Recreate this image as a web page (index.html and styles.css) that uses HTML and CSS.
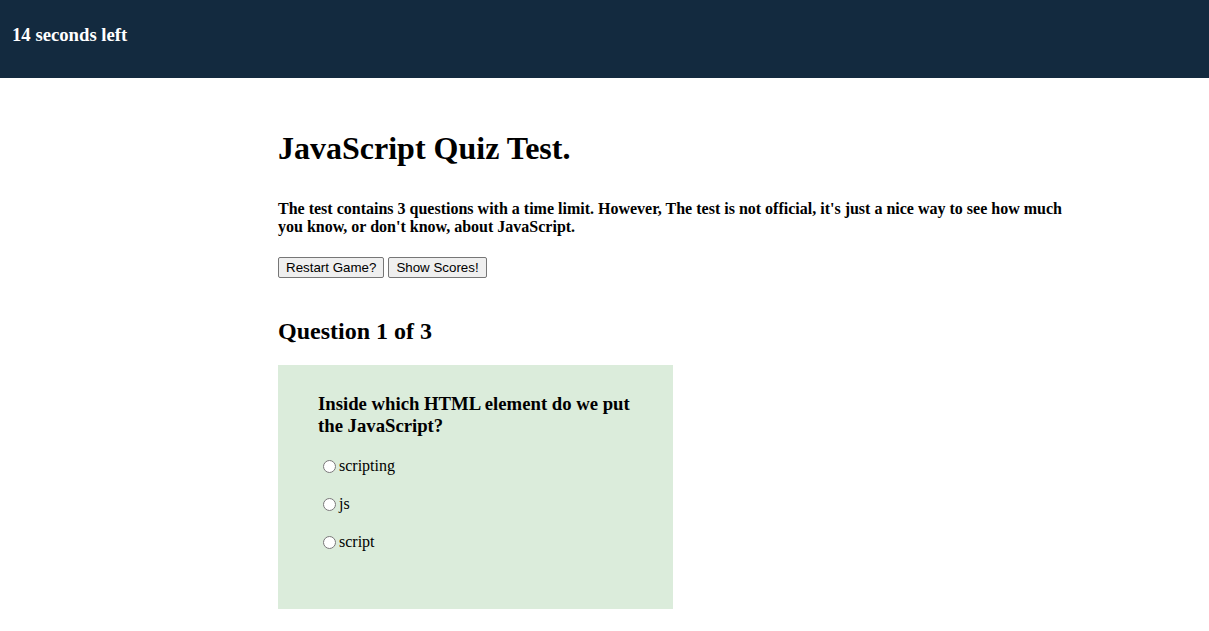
FILE: index.html
```html
<!DOCTYPE html>
<html>
  <head>
    <title>JavaScript Quiz</title>
    <link rel="stylesheet" href="styles.css">
  </head>
  <body>
    <header class="timer-bar">
      <h3 class="timer-bar__text"><span id="seconds">14</span> seconds left</h3>
    </header>

    <main class="quiz">
      <h1 class="quiz__title">JavaScript Quiz Test.</h1>
      <p class="quiz__intro">The test contains 3 questions with a time limit. However, The test is not official, it's just a nice way to see how much you know, or don't know, about JavaScript.</p>

      <div class="quiz__actions">
        <button type="button" id="restart">Restart Game?</button>
        <button type="button" id="scores">Show Scores!</button>
      </div>

      <h2 class="quiz__counter">Question 1 of 3</h2>

      <form class="question" action="">
        <h3 class="question__text">Inside which HTML element do we put the JavaScript?</h3>
        <label class="question__option"><input type="radio" name="answer" value="scripting">scripting</label>
        <label class="question__option"><input type="radio" name="answer" value="js">js</label>
        <label class="question__option"><input type="radio" name="answer" value="script">script</label>
      </form>
    </main>
  </body>
</html>
```

FILE: styles.css
```css
body { margin: 0; font-family: "Liberation Serif", "Times New Roman", serif; font-size: 16px; color: #000; }

.timer-bar {
  background-color: #132a3f;
  color: #fff;
  height: 78px;
  box-sizing: border-box;
  padding: 24px 12px 0;
}
.timer-bar__text {
  margin: 0;
  font-size: 18.72px;
}

.quiz {
  width: 800px;
  margin: 0 0 0 278px;
  padding-top: 52px;
}
.quiz__title { font-size: 32px; margin: 0 0 33px; }
.quiz__intro { font-weight: bold; margin: 0 0 21px; }

.quiz__actions { display: flex; gap: 4px; }
.quiz__actions > button {
  font-family: "Liberation Sans", Arial, sans-serif;
  font-size: 13.33px;
  height: 21px;
  padding: 1px 7px;
  background: #efefef;
  border: 1px solid #767676;
  border-radius: 2px;
  color: #000;
}

.quiz__counter { font-size: 24px; margin: 40px 0 20px; }

.question {
  width: 395px;
  box-sizing: border-box;
  background-color: #dbecdb;
  padding: 28px 40px 57px;
  display: flex;
  flex-flow: column nowrap;
  align-items: flex-start;
}
.question__text { font-size: 18.72px; margin: 0 0 19px; }
.question__option { display: flex; align-items: center; height: 20px; margin-bottom: 18px; }
.question__option:last-child { margin-bottom: 0; }
.question__option > input { margin: 0 3px 0 5px; }
```
